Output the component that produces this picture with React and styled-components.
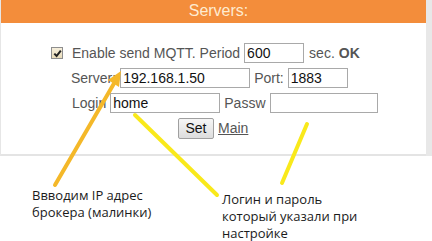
import React from 'react';
import styled, { createGlobalStyle } from 'styled-components';

const Global = createGlobalStyle`
    html, body {
        margin: 0;
        padding: 0;
        background: #fff;
    }
`

const Page = styled.div`
    position: relative;
    width: 432px;
    height: 241px;
    overflow: hidden;
    background: #fff;
    font-family: "Liberation Sans", Arial, sans-serif;
`

const Top = styled.div`
    display: flex;
`

const Panel = styled.div`
    width: 425px;
    height: 154px;
    border-left: 1px solid #e6e6e6;
    border-bottom: 2px solid #e4e4e4;
    background: #fff;
`

const SideBand = styled.div`
    width: 6px;
    height: 156px;
    background: #e8e8e8;
`

const Header = styled.div`
    height: 23px;
    background: #f38d3b;
    color: #feebd0;
    font-size: 16px;
    line-height: 22px;
    text-align: center;
    padding-left: 10px;
`

const Form = styled.div`
    display: flex;
    flex-direction: column;
    gap: 5px;
    padding-top: 20px;
`

const Row = styled.div`
    display: flex;
    align-items: center;
    height: 20px;
    padding-left: ${p => p.$indent}px;
    gap: ${p => p.$gap || 4}px;
    font-size: 14px;
    color: #555;
    white-space: nowrap;
`

const Label = styled.span`
    font-weight: ${p => (p.$bold ? 'bold' : 'normal')};
    margin-left: ${p => p.$ml || 0}px;
`

const Input = styled.div`
    box-sizing: border-box;
    width: ${p => p.$w}px;
    height: 20px;
    border: 1px solid #a9a9a9;
    padding: 0 2px;
    font-size: 14px;
    line-height: 18px;
    color: #111;
    background: #fff;
`

const Check = styled.span`
    box-sizing: border-box;
    width: 12px;
    height: 12px;
    margin-right: 5px;
    border: 1px solid #8e8e8e;
    background: linear-gradient(#f6efdc, #e9dcb9);
    display: flex;
    align-items: center;
    justify-content: center;
`

const Button = styled.div`
    box-sizing: border-box;
    width: 36px;
    height: 21px;
    border: 1px solid #a0a0a0;
    border-radius: 2px;
    background: linear-gradient(#f6f6f6, #dddddd);
    color: #111;
    font-size: 14px;
    line-height: 19px;
    text-align: center;
`

const Link = styled.span`
    text-decoration: underline;
    color: #555;
`

const Notes = styled.div`
    position: relative;
    display: flex;
    font-family: "Open Sans", "Noto Sans", sans-serif;
    font-size: 13px;
    line-height: 17px;
    color: #1b1b1b;
`

const Note = styled.div`
    margin-left: ${p => p.$ml}px;
    margin-top: ${p => p.$mt}px;
    width: ${p => p.$w}px;
`

const Overlay = styled.svg`
    position: absolute;
    left: 0;
    top: 0;
    pointer-events: none;
`

const App = () => {
    return (
        <Page>
            <Global />
            <Top>
                <Panel>
                    <Header>Servers:</Header>
                    <Form>
                        <Row $indent={50} $gap={4}>
                            <Check>
                                <svg width="9" height="9" viewBox="0 0 9 9">
                                    <path d="M1.3 4.6 L3.6 7 L7.8 1.6" fill="none" stroke="#222" strokeWidth="2" />
                                </svg>
                            </Check>
                            <Label>Enable send MQTT. Period</Label>
                            <Input $w={60}>600</Input>
                            <Label $ml={1}>sec.</Label>
                            <Label $bold>OK</Label>
                        </Row>
                        <Row $indent={70}>
                            <Label>Server:</Label>
                            <Input $w={130}>192.168.1.50</Input>
                            <Label>Port:</Label>
                            <Input $w={60}>1883</Input>
                        </Row>
                        <Row $indent={71}>
                            <Label>Login</Label>
                            <Input $w={110}>home</Input>
                            <Label>Passw</Label>
                            <Input $w={108}></Input>
                        </Row>
                        <Row $indent={177}>
                            <Button>Set</Button>
                            <Link>Main</Link>
                        </Row>
                    </Form>
                </Panel>
                <SideBand />
            </Top>
            <Notes>
                <Note $ml={32} $mt={31} $w={150}>
                    Ввводим IP адрес<br />брокера (малинки)
                </Note>
                <Note $ml={40} $mt={35} $w={170}>
                    Логин и пароль<br />который указали при<br />настройке
                </Note>
            </Notes>
            <Overlay width="432" height="241" viewBox="0 0 432 241">
                <line x1="55" y1="185" x2="116" y2="80" stroke="#f4b829" strokeWidth="4" strokeLinecap="round" />
                <polygon points="121,71 119,87 108,80" fill="#f4b829" />
                <line x1="135" y1="115" x2="217" y2="195" stroke="#f9e91b" strokeWidth="4" strokeLinecap="round" />
                <line x1="307" y1="124" x2="282" y2="183" stroke="#f9e91b" strokeWidth="4" strokeLinecap="round" />
            </Overlay>
        </Page>
    );
};

export default App;
